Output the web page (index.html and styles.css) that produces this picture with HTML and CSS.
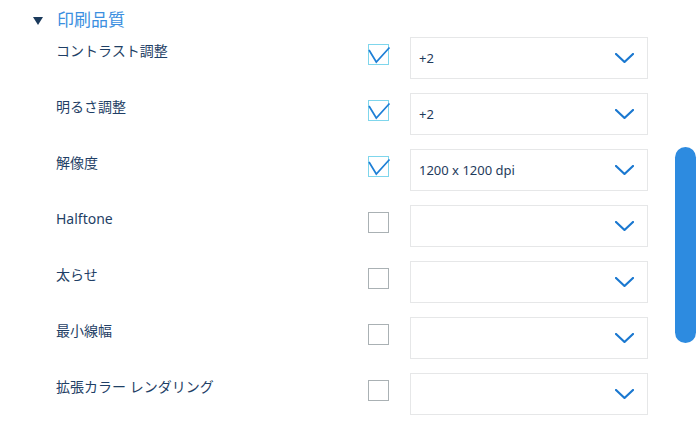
FILE: index.html
```html
<!DOCTYPE html>
<html lang="ja">
<head>
<meta charset="utf-8">
<title>印刷品質</title>
<link rel="stylesheet" href="styles.css">
</head>
<body>
<div class="page">
  <div class="panel">
    <div class="section-head">
      <span class="caret"></span>
      <span class="section-title">印刷品質</span>
    </div>
    <div class="rows">
      <div class="row">
        <div class="label">コントラスト調整</div>
        <div class="check on"><svg viewBox="0 0 21 21" width="21" height="21"><polyline points="1,6 8.3,18 21.5,3.5"/></svg></div>
        <div class="select"><span class="value">+2</span><svg class="chev" viewBox="0 0 19 10" width="19" height="10"><polyline points="1,1 9.5,9 18,1"/></svg></div>
      </div>
      <div class="row">
        <div class="label">明るさ調整</div>
        <div class="check on"><svg viewBox="0 0 21 21" width="21" height="21"><polyline points="1,6 8.3,18 21.5,3.5"/></svg></div>
        <div class="select"><span class="value">+2</span><svg class="chev" viewBox="0 0 19 10" width="19" height="10"><polyline points="1,1 9.5,9 18,1"/></svg></div>
      </div>
      <div class="row">
        <div class="label">解像度</div>
        <div class="check on"><svg viewBox="0 0 21 21" width="21" height="21"><polyline points="1,6 8.3,18 21.5,3.5"/></svg></div>
        <div class="select"><span class="value">1200 x 1200 dpi</span><svg class="chev" viewBox="0 0 19 10" width="19" height="10"><polyline points="1,1 9.5,9 18,1"/></svg></div>
      </div>
      <div class="row">
        <div class="label">Halftone</div>
        <div class="check"></div>
        <div class="select"><span class="value"></span><svg class="chev" viewBox="0 0 19 10" width="19" height="10"><polyline points="1,1 9.5,9 18,1"/></svg></div>
      </div>
      <div class="row">
        <div class="label">太らせ</div>
        <div class="check"></div>
        <div class="select"><span class="value"></span><svg class="chev" viewBox="0 0 19 10" width="19" height="10"><polyline points="1,1 9.5,9 18,1"/></svg></div>
      </div>
      <div class="row">
        <div class="label">最小線幅</div>
        <div class="check"></div>
        <div class="select"><span class="value"></span><svg class="chev" viewBox="0 0 19 10" width="19" height="10"><polyline points="1,1 9.5,9 18,1"/></svg></div>
      </div>
      <div class="row">
        <div class="label">拡張カラー レンダリング</div>
        <div class="check"></div>
        <div class="select"><span class="value"></span><svg class="chev" viewBox="0 0 19 10" width="19" height="10"><polyline points="1,1 9.5,9 18,1"/></svg></div>
      </div>
    </div>
  </div>
  <div class="scroll">
    <div class="thumb"></div>
  </div>
</div>
</body>
</html>
```
FILE: styles.css
```css
* { box-sizing: border-box; }
html, body {
  margin: 0;
  padding: 0;
  background: #ffffff;
}
body {
  font-family: "Noto Sans", "Noto Sans CJK JP", sans-serif;
  color: #1f3f66;
}
.page {
  display: flex;
  width: 698px;
  height: 426px;
  overflow: hidden;
}
.panel {
  flex: 1;
}
.section-head {
  display: flex;
  align-items: center;
  height: 32px;
  padding-top: 8px;
  padding-left: 33px;
  margin-bottom: 5px;
}
.caret {
  width: 0;
  height: 0;
  border-left: 5px solid transparent;
  border-right: 5px solid transparent;
  border-top: 8px solid #1b3a5c;
  margin-top: 1px;
}
.section-title {
  margin-left: 14px;
  font-size: 17px;
  line-height: 24px;
  color: #3b8fe0;
}
.rows {
  padding-left: 56px;
}
.row {
  display: grid;
  grid-template-columns: 312px 21px 21px 238px;
  height: 42px;
  margin-bottom: 14px;
}
.label {
  font-size: 14px;
  line-height: 20px;
  padding-top: 4px;
  white-space: nowrap;
}
.check {
  width: 21px;
  height: 21px;
  margin-top: 7px;
  border: 1px solid #aab1b4;
  position: relative;
}
.check.on {
  border-color: #7fd6ec;
}
.check svg {
  position: absolute;
  left: -1px;
  top: -1px;
  overflow: visible;
  fill: none;
  stroke: #1e7fd6;
  stroke-width: 1.7;
}
.select {
  grid-column: 4;
  height: 42px;
  border: 1px solid #e6e7e8;
  display: flex;
  align-items: center;
  justify-content: space-between;
  padding: 0 13px 0 8px;
}
.value {
  font-size: 13px;
  color: #1f3b5c;
}
.chev {
  fill: none;
  stroke: #1a78d0;
  stroke-width: 2.2;
  stroke-linecap: round;
  stroke-linejoin: round;
}
.scroll {
  width: 23px;
  padding-top: 147px;
  padding-right: 2px;
}
.thumb {
  width: 21px;
  height: 196px;
  border-radius: 10.5px;
  background: #2d8be0;
}
```
